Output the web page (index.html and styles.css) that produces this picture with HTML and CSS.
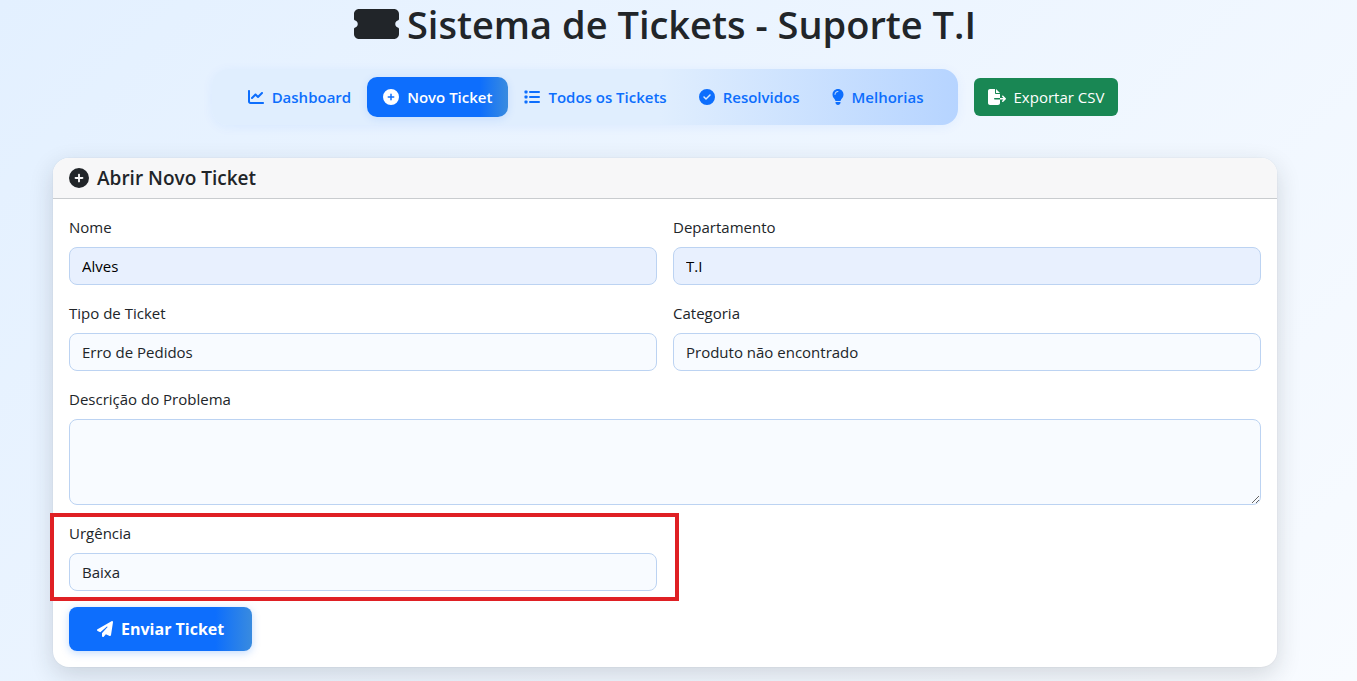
FILE: index.html
```html
<!DOCTYPE html>
<html lang="pt-BR">

<head>
    <meta charset="UTF-8">
    <meta name="viewport" content="width=device-width, initial-scale=1.0">
    <title>Sistema de Tickets - Suporte T.I</title>
    <link rel="stylesheet" href="styles.css">
</head>

<body>
    <!-- shared icon shapes -->
    <svg class="sprite" aria-hidden="true">
        <symbol id="plus" viewBox="0 0 512 512">
            <path d="M256 512A256 256 0 1 0 256 0a256 256 0 1 0 0 512zM232 344V280H168c-13.3 0-24-10.7-24-24s10.7-24 24-24h64V168c0-13.3 10.7-24 24-24s24 10.7 24 24v64h64c13.3 0 24 10.7 24 24s-10.7 24-24 24H280v64c0 13.3-10.7 24-24 24s-24-10.7-24-24z"/>
        </symbol>
    </svg>

    <div class="container">
        <h1 class="title">
            <svg class="icon ticket-icon" viewBox="0 0 576 512"><path d="M64 64C28.7 64 0 92.7 0 128v64c0 8.8 7.4 15.7 15.7 18.6C34.5 217.1 48 235 48 256s-13.5 38.9-32.3 45.4C7.4 304.3 0 311.2 0 320v64c0 35.3 28.7 64 64 64H512c35.3 0 64-28.7 64-64V320c0-8.8-7.4-15.7-15.7-18.6C541.5 294.9 528 277 528 256s13.5-38.9 32.3-45.4c8.3-2.9 15.7-9.8 15.7-18.6V128c0-35.3-28.7-64-64-64H64z"/></svg>
            <span>Sistema de Tickets - Suporte T.I</span>
        </h1>

        <div class="toolbar">
            <nav class="menu">
                <a class="menu-link" href="#dashboard">
                    <svg class="icon" viewBox="0 0 512 512"><path d="M64 64c0-17.7-14.3-32-32-32S0 46.3 0 64V400c0 44.2 35.8 80 80 80H480c17.7 0 32-14.3 32-32s-14.3-32-32-32H80c-8.8 0-16-7.2-16-16V64zm406.6 86.6c12.5-12.5 12.5-32.8 0-45.3s-32.8-12.5-45.3 0L320 210.7l-57.4-57.4c-12.5-12.5-32.8-12.5-45.3 0l-112 112c-12.5 12.5-12.5 32.8 0 45.3s32.8 12.5 45.3 0L240 221.3l57.4 57.4c12.5 12.5 32.8 12.5 45.3 0l128-128z"/></svg>
                    Dashboard
                </a>
                <a class="menu-link active" href="#novo">
                    <svg class="icon"><use href="#plus"/></svg>
                    Novo Ticket
                </a>
                <a class="menu-link" href="#todos">
                    <svg class="icon" viewBox="0 0 512 512">
                        <rect x="16" y="48" width="96" height="96" rx="24"/>
                        <rect x="16" y="208" width="96" height="96" rx="24"/>
                        <rect x="16" y="368" width="96" height="96" rx="24"/>
                        <rect x="160" y="64" width="352" height="64" rx="32"/>
                        <rect x="160" y="224" width="352" height="64" rx="32"/>
                        <rect x="160" y="384" width="352" height="64" rx="32"/>
                    </svg>
                    Todos os Tickets
                </a>
                <a class="menu-link" href="#resolvidos">
                    <svg class="icon" viewBox="0 0 512 512"><path d="M256 512A256 256 0 1 0 256 0a256 256 0 1 0 0 512zM369 209L241 337c-9.4 9.4-24.6 9.4-33.9 0l-64-64c-9.4-9.4-9.4-24.6 0-33.9s24.6-9.4 33.9 0l47 47L335 175c9.4-9.4 24.6-9.4 33.9 0s9.4 24.6 0 33.9z"/></svg>
                    Resolvidos
                </a>
                <a class="menu-link" href="#melhorias">
                    <svg class="icon bulb-icon" viewBox="0 0 384 512"><path d="M272 384c9.6-31.9 29.5-59.1 49.2-86.2l0 0c5.2-7.1 10.4-14.2 15.4-21.4c19.8-28.5 31.4-63 31.4-100.3C368 78.8 289.2 0 192 0S16 78.8 16 176c0 37.3 11.6 71.9 31.4 100.3c5 7.2 10.2 14.3 15.4 21.4l0 0c19.8 27.1 39.7 54.4 49.2 86.2H272zM192 512c44.2 0 80-35.8 80-80V416H112v16c0 44.2 35.8 80 80 80zM112 176c0 8.8-7.2 16-16 16s-16-7.2-16-16c0-61.9 50.1-112 112-112c8.8 0 16 7.2 16 16s-7.2 16-16 16c-44.2 0-80 35.8-80 80z"/></svg>
                    Melhorias
                </a>
            </nav>
            <button class="export-btn" type="button">
                <svg class="icon export-icon" viewBox="0 0 576 512"><path d="M0 64C0 28.7 28.7 0 64 0H224V128c0 17.7 14.3 32 32 32H384V288H216c-13.3 0-24 10.7-24 24s10.7 24 24 24H384V448c0 35.3-28.7 64-64 64H64c-35.3 0-64-28.7-64-64V64zM384 336V288H494.1l-39-39c-9.4-9.4-9.4-24.6 0-33.9s24.6-9.4 33.9 0l80 80c9.4 9.4 9.4 24.6 0 33.9l-80 80c-9.4 9.4-24.6 9.4-33.9 0s-9.4-24.6 0-33.9l39-39H384zm0-208H256V0L384 128z"/></svg>
                Exportar CSV
            </button>
        </div>

        <div class="card">
            <h2 class="card-header">
                <svg class="icon"><use href="#plus"/></svg>
                Abrir Novo Ticket
            </h2>
            <form class="card-body">
                <div class="row">
                    <div class="field">
                        <label for="nome">Nome</label>
                        <input class="control filled" id="nome" type="text" value="Alves">
                    </div>
                    <div class="field">
                        <label for="departamento">Departamento</label>
                        <input class="control filled" id="departamento" type="text" value="T.I">
                    </div>
                </div>
                <div class="row">
                    <div class="field">
                        <label for="tipo">Tipo de Ticket</label>
                        <select class="control" id="tipo">
                            <option>Erro de Pedidos</option>
                        </select>
                    </div>
                    <div class="field">
                        <label for="categoria">Categoria</label>
                        <select class="control" id="categoria">
                            <option>Produto não encontrado</option>
                        </select>
                    </div>
                </div>
                <div class="field">
                    <label for="descricao">Descrição do Problema</label>
                    <textarea class="control" id="descricao" rows="3"></textarea>
                </div>
                <div class="row">
                    <div class="field highlight">
                        <label for="urgencia">Urgência</label>
                        <select class="control" id="urgencia">
                            <option>Baixa</option>
                        </select>
                    </div>
                    <div class="field"></div>
                </div>
                <button class="send-btn" type="submit">
                    <svg class="icon" viewBox="0 0 512 512"><path d="M498.1 5.6c10.1 7 15.4 19.1 13.5 31.2l-64 416c-1.5 9.7-7.4 18.2-16 23s-18.9 5.4-28 1.6L284 427.7l-68.5 74.1c-8.9 9.7-22.9 12.9-35.2 8.1S160 493.2 160 480V396.4c0-4 1.5-7.8 4.2-10.7L331.8 202.8c5.8-6.3 5.6-16-.4-22s-15.7-6.4-22-.7L106 360.8 17.7 316.6C7.1 311.3 .3 300.7 0 288.9s5.9-22.8 16.1-28.7l448-256c10.7-6.1 23.9-5.5 34 1.4z"/></svg>
                    Enviar Ticket
                </button>
            </form>
        </div>
    </div>
</body>

</html>
```
FILE: styles.css
```css
* {
    margin: 0;
    padding: 0;
    box-sizing: border-box;
}

body {
    min-height: 100vh;
    background: linear-gradient(135deg, #e3f0ff 0%, #f8fbff 100%);
    color: #212529;
    font-family: "Segoe UI", "Open Sans", sans-serif;
    font-size: 15px;
    line-height: 24px;
}

.sprite {
    display: none;
}

.container {
    padding: 0 80px 13px 53px;
}

.icon {
    width: 16px;
    height: 16px;
    fill: currentColor;
    flex-shrink: 0;
}

.title {
    display: flex;
    justify-content: center;
    align-items: center;
    gap: 8px;
    font-size: 38px;
    font-weight: 600;
    line-height: 48px;
}

.ticket-icon {
    width: 45px;
    height: 40px;
}

.toolbar {
    display: flex;
    justify-content: center;
    align-items: center;
    gap: 16px;
    margin: 21px 0 33px;
}

.menu {
    display: flex;
    padding: 8px 18px 8px 20px;
    border-radius: 16px;
    background: linear-gradient(90deg, #e0eefe 60%, #b6d4ff 100%);
    box-shadow: 0 2px 12px rgba(13, 110, 253, 0.06);
}

.menu-link {
    display: flex;
    align-items: center;
    gap: 8px;
    padding: 8px 16px;
    border-radius: 10px;
    color: #0d6efd;
    font-weight: 600;
    text-decoration: none;
}

.menu-link.active {
    background: linear-gradient(90deg, #0d6efd 80%, #398bdf 100%);
    box-shadow: 0 2px 8px rgba(13, 110, 253, 0.12);
    color: white;
}

.bulb-icon {
    width: 12px;
}

button {
    display: flex;
    align-items: center;
    gap: 8px;
    border: none;
    color: white;
    font: inherit;
}

.export-btn {
    padding: 7px 14px;
    border-radius: 6px;
    background-color: #198754;
}

.export-icon {
    width: 18px;
}

.card {
    border-radius: 16px;
    background-color: white;
    box-shadow: 0 8px 24px rgba(33, 37, 41, 0.16), 0 0 0 1px rgba(0, 0, 0, 0.02);
}

.card-header {
    display: flex;
    align-items: center;
    gap: 8px;
    padding: 8px 16px;
    border-bottom: 1px solid #c9cccf;
    border-radius: 16px 16px 0 0;
    background-color: #f7f7f8;
    font-size: 19px;
    font-weight: 600;
    line-height: 24px;
}

.card-header .icon {
    width: 20px;
    height: 20px;
}

.card-body {
    display: flex;
    flex-direction: column;
    gap: 16px;
    padding: 16px;
}

.row {
    display: flex;
    gap: 16px;
}

.field {
    display: flex;
    flex-direction: column;
    flex: 1;
    gap: 8px;
}

.control {
    width: 100%;
    height: 38px;
    padding: 6px 12px;
    border: 1px solid #bcd3f2;
    border-radius: 8px;
    background-color: #f8fbff;
    color: #212529;
    font: inherit;
    appearance: none;
}

.control.filled {
    background-color: #e8f0fe;
    color: black;
}

textarea.control {
    height: 86px;
    resize: vertical;
}

/* red frame around the urgency field */
.highlight {
    position: relative;
}

.highlight::after {
    content: "";
    position: absolute;
    inset: -8px -22px -10px -19px;
    border: 4px solid #df2024;
    pointer-events: none;
}

.send-btn {
    align-self: flex-start;
    padding: 10px 28px;
    border-radius: 8px;
    background: linear-gradient(90deg, #0d6efd 80%, #398bdf 100%);
    box-shadow: 0 2px 8px rgba(13, 110, 253, 0.25);
    font-size: 16px;
    font-weight: 700;
}
```
